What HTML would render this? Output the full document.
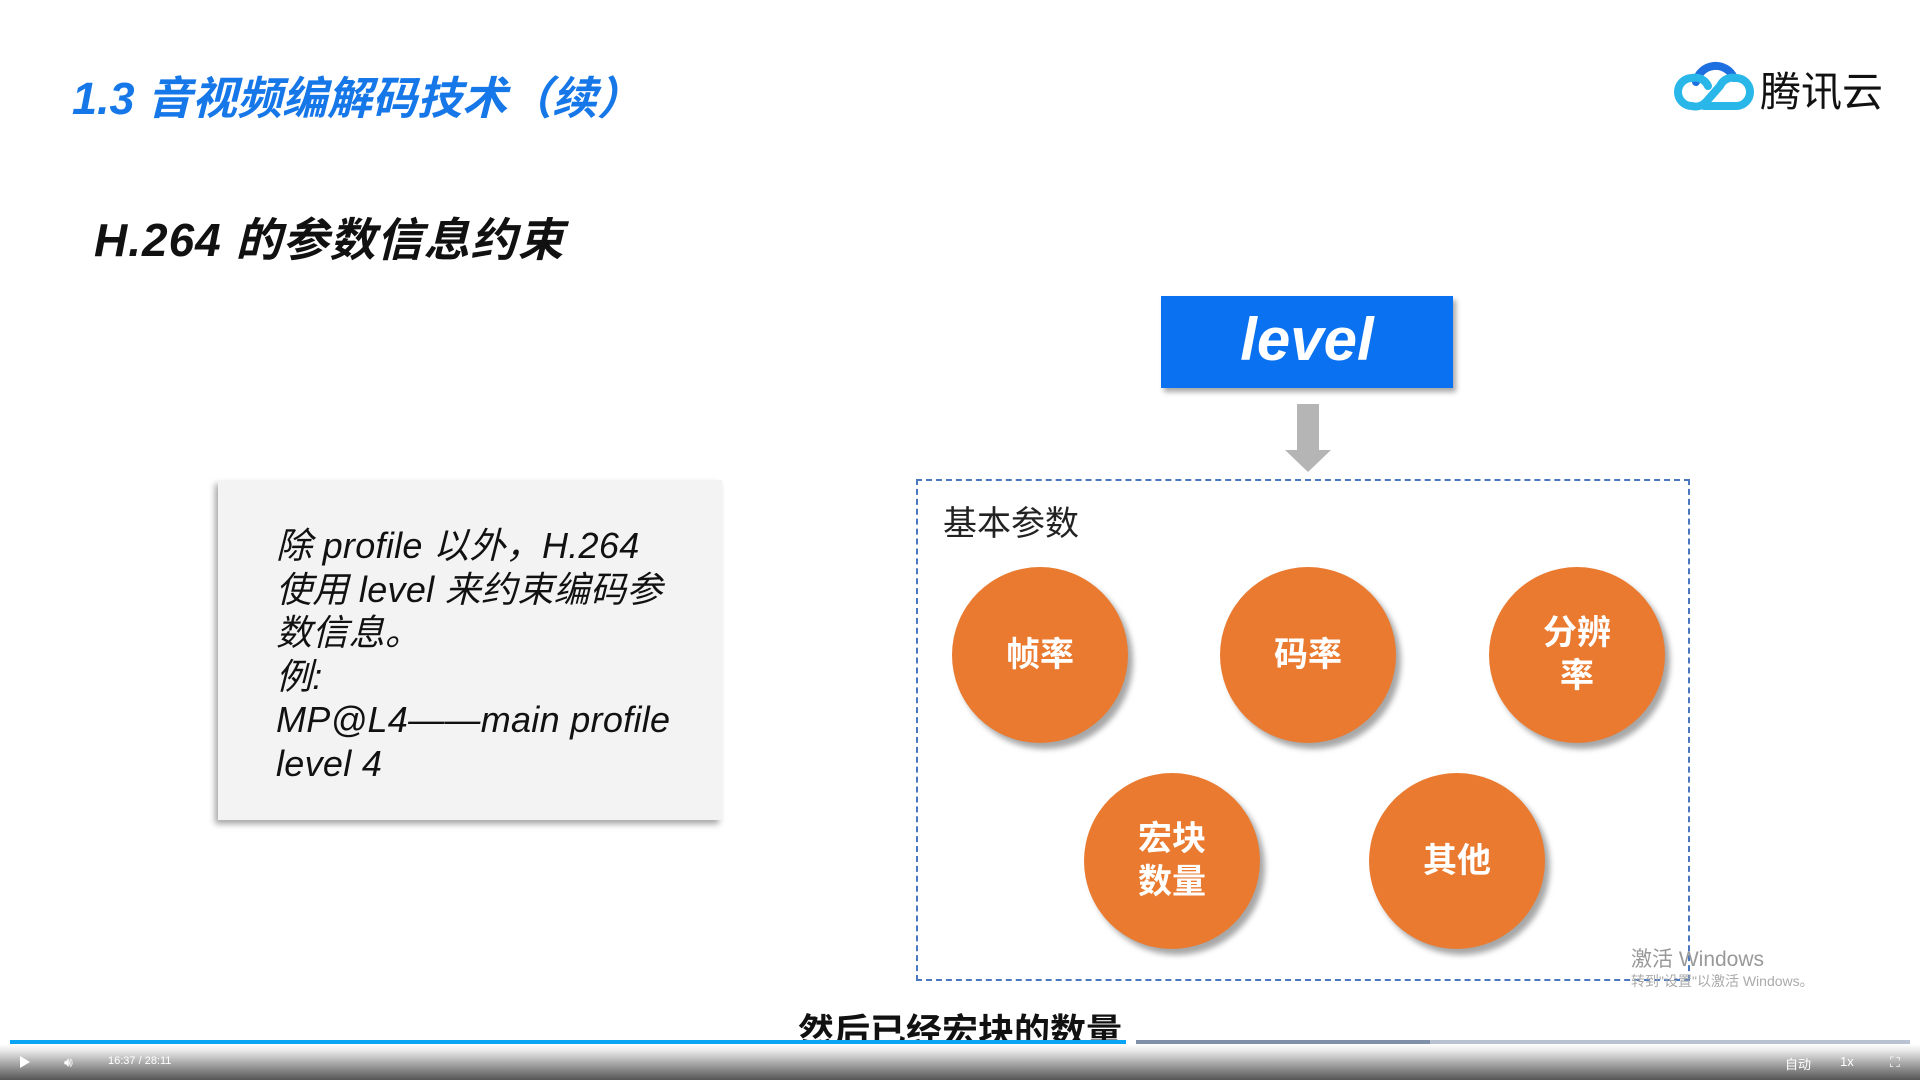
<!DOCTYPE html>
<html><head><meta charset="utf-8"><style>
*{margin:0;padding:0;box-sizing:border-box}
body{width:1920px;height:1080px;background:#fff;position:relative;overflow:hidden;font-family:"Liberation Sans","Noto Sans CJK SC",sans-serif}
.a{position:absolute;white-space:nowrap}
.title{left:72px;top:62px;font-size:45px;color:#1677e8;font-style:italic;font-weight:bold;letter-spacing:0px}
.sub{left:94px;top:204px;font-size:46px;color:#111;font-style:italic;font-weight:bold;letter-spacing:1px}
.lvl{left:1161px;top:296px;width:292px;height:92px;background:#0a72f0;box-shadow:3px 4px 5px rgba(0,0,0,.35);color:#fff;font-size:60px;font-style:italic;font-weight:bold;text-align:center;line-height:88px}
.dash{left:916px;top:479px;width:774px;height:502px;border:2px dashed #4a78c0}
.c{position:absolute;width:176px;height:176px;border-radius:50%;background:#e97a2f;box-shadow:5px 6px 6px rgba(0,0,0,.35);color:#fff;font-weight:bold;font-size:34px;display:flex;align-items:center;justify-content:center;text-align:center;line-height:43px}
.card{left:218px;top:480px;width:504px;height:340px;background:#f3f3f3;box-shadow:-3px 4px 6px rgba(0,0,0,.35)}
.ct{left:276px;top:524px;font-size:36px;line-height:43.5px;font-style:italic;color:#111;letter-spacing:0.3px}
.ctrl{left:0;top:1044px;width:1920px;height:36px;background:linear-gradient(#fff,#e6e6e6 20%,#8a8a8a 70%,#555)}
</style></head><body>
<div class="a title">1.3 音视频编解码技术（续）</div>
<svg class="a" style="left:1674px;top:52px" width="82" height="64" viewBox="0 0 82 64">
<path d="M22 30 A20 20 0 0 1 60 26" fill="none" stroke="#1e6fe0" stroke-width="8" stroke-linecap="round"/>
<path d="M30 54 L62 54 A14 14 0 0 0 62 26 A14 14 0 0 0 46 34 L32 50 A14 14 0 0 1 18 54 A14 14 0 0 1 18 26 A14 14 0 0 1 34 34" fill="none" stroke="#29b6e8" stroke-width="8" stroke-linecap="round"/>
</svg>
<div class="a" style="left:1760px;top:58px;font-size:41px;color:#111">腾讯云</div>
<div class="a sub">H.264 的参数信息约束</div>
<div class="a lvl">level</div>
<div class="a" style="left:1297px;top:404px;width:22px;height:48px;background:#b5b5b5"></div>
<div class="a" style="left:1285px;top:450px;width:0;height:0;border-left:23px solid transparent;border-right:23px solid transparent;border-top:22px solid #b5b5b5"></div>
<div class="a dash"></div>
<div class="a" style="left:943px;top:496px;font-size:34px;color:#222">基本参数</div>
<div class="c" style="left:952px;top:567px">帧率</div>
<div class="c" style="left:1220px;top:567px">码率</div>
<div class="c" style="left:1489px;top:567px">分辨<br>率</div>
<div class="c" style="left:1084px;top:773px">宏块<br>数量</div>
<div class="c" style="left:1369px;top:773px">其他</div>
<div class="a card"></div>
<div class="a ct">除 profile 以外，H.264<br>使用 level 来约束编码参<br>数信息。<br>例:<br>MP@L4——main profile<br>level 4</div>
<div class="a" style="left:1631px;top:943px;font-size:21px;color:#999">激活 Windows</div>
<div class="a" style="left:1631px;top:971px;font-size:14px;color:#aaa">转到"设置"以激活 Windows。</div>
<div class="a" style="left:0;top:1003px;width:1920px;text-align:center;font-size:36px;font-weight:bold;color:#111">然后已经宏块的数量</div>
<div class="a" style="left:10px;top:1040px;width:1116px;height:4px;background:#0aa4f5"></div>
<div class="a" style="left:1136px;top:1040px;width:294px;height:4px;background:#8090a8"></div>
<div class="a" style="left:1430px;top:1040px;width:480px;height:4px;background:#b8c2d0"></div>
<div class="a ctrl"></div>
<div class="a" style="left:20px;top:1056px;width:0;height:0;border-left:10px solid #fff;border-top:6px solid transparent;border-bottom:6px solid transparent"></div>
<div class="a" style="left:64px;top:1054px;font-size:14px;color:#fff">🔊︎</div>
<div class="a" style="left:108px;top:1055px;font-size:11px;color:#fff">16:37 / 28:11</div>
<div class="a" style="left:1785px;top:1054px;font-size:13px;color:#fff">自动</div>
<div class="a" style="left:1840px;top:1054px;font-size:13px;color:#fff">1x</div>
<div class="a" style="left:1890px;top:1054px;font-size:14px;color:#fff">⛶</div>
</body></html>
